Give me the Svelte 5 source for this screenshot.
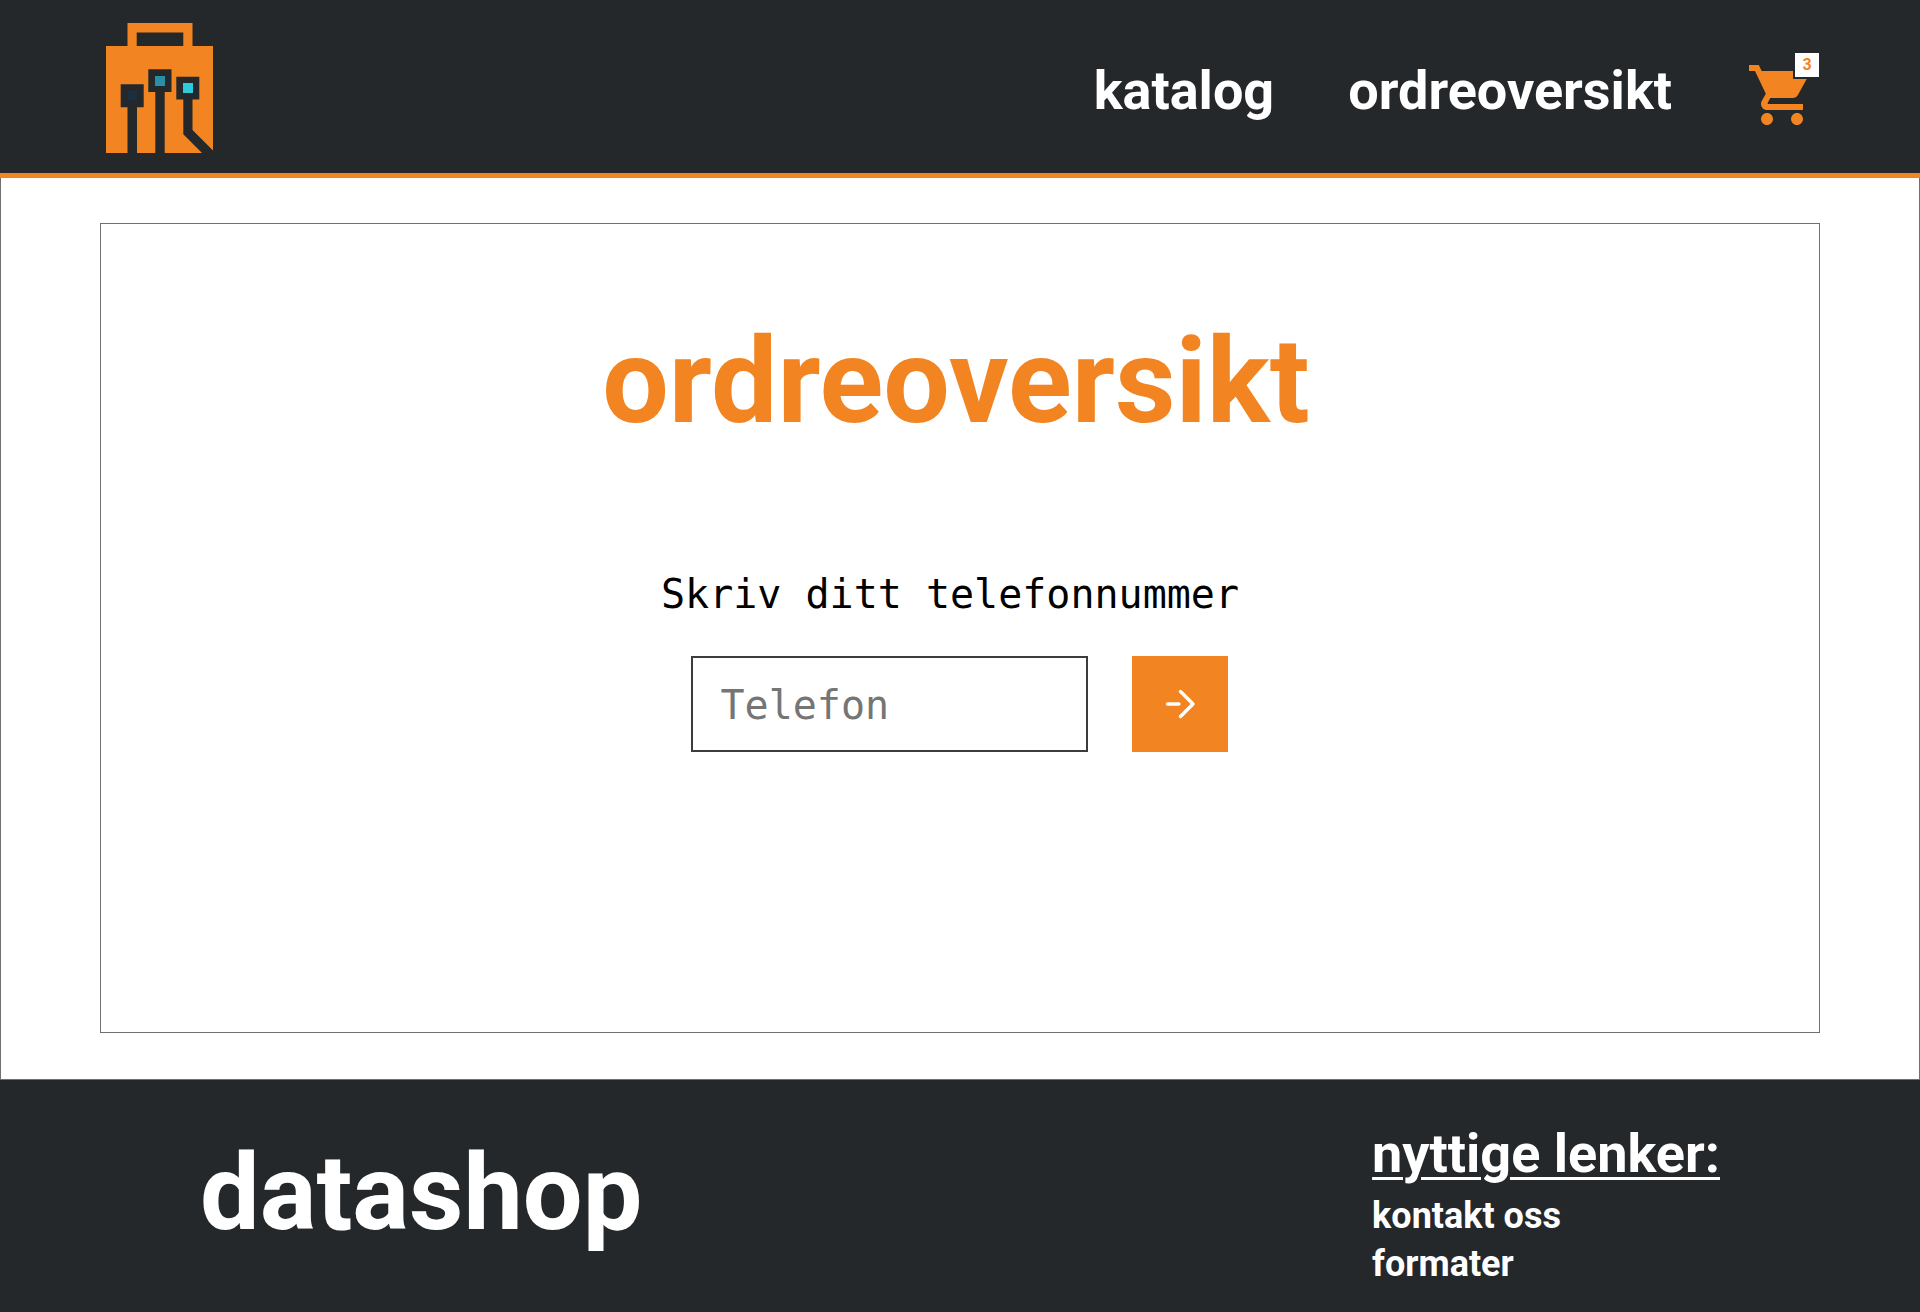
<script>
  let phone = $state('');
  const cartCount = 3;
  const links = ['kontakt oss', 'formater'];
</script>

<div class="page">
  <header>
    <a class="logo" href="/" aria-label="datashop">
      <svg width="107" height="130" viewBox="0 0 107 130" aria-hidden="true">
        <path fill="#f28522" fill-rule="evenodd" d="M21.5 0H86.5V23H107V130H0V23H21.5ZM30.7 9.6V23H77.3V9.6Z" />
        <g fill="#24282b">
          <path d="M14.7 61.3H37.7V84.3H31V130H21.5V84.3H14.7Z" />
          <path d="M42.3 46.2H65.5V69H58.7V130H49.3V69H42.3Z" />
          <path d="M70.3 53.8H93.3V76.5H86.5V107L107 127.5V130H96L77.3 111.3V76.5H70.3Z" />
        </g>
        <path fill="#1b2f3f" d="M21.3 68H31V77.7H21.3Z" />
        <path fill="#298fa8" d="M49 53H59V63H49Z" />
        <path fill="#2fc9dc" d="M77 60H87V70H77Z" />
      </svg>
    </a>
    <nav>
      <a class="link" href="/katalog">katalog</a>
      <a class="link" href="/ordreoversikt">ordreoversikt</a>
      <a class="cart" href="/handlekurv" aria-label="handlekurv">
        <svg width="72" height="72" viewBox="0 0 24 24" aria-hidden="true">
          <path fill="#f28522" d="M7 18c-1.1 0-1.99.9-1.99 2S5.9 22 7 22s2-.9 2-2-.9-2-2-2zM1 2v2h2l3.600 7.590-1.350 2.450c-.160.280-.250.610-.250.960 0 1.100.900 2 2 2h12v-2H7.420c-.140 0-.250-.110-.250-.250l.030-.120.900-1.630h7.450c.750 0 1.410-.410 1.750-1.030l3.580-6.490c.080-.140.120-.310.120-.480 0-.550-.450-1-1-1H5.210l-.940-2H1zm16 16c-1.100 0-1.990.900-1.990 2s.890 2 1.990 2 2-.900 2-2-.900-2-2-2z" />
        </svg>
        <span class="badge">{cartCount}</span>
      </a>
    </nav>
  </header>

  <main>
    <section>
      <h1>ordreoversikt</h1>
      <form onsubmit={(e) => e.preventDefault()}>
        <label for="phone">Skriv ditt telefonnummer</label>
        <div class="row">
          <input id="phone" type="tel" placeholder="Telefon" bind:value={phone} />
          <button type="submit" aria-label="Neste">
            <svg width="32" height="32" viewBox="0 0 32 32" aria-hidden="true">
              <path fill="none" stroke="#fff" stroke-width="3.4" stroke-linecap="round" stroke-linejoin="round" d="M3.500 16H15M16.500 3.500L29 16L16.500 28.500" />
            </svg>
          </button>
        </div>
      </form>
    </section>
  </main>

  <footer>
    <p class="brand">datashop</p>
    <div class="links">
      <h2>nyttige lenker:</h2>
      <ul>
        {#each links as link}
          <li><a href="/{link.replace(' ', '-')}">{link}</a></li>
        {/each}
      </ul>
    </div>
  </footer>
</div>

<style>
  :global(body) {
    margin: 0;
    background: #fff;
  }
  .page {
    min-height: 100vh;
    display: flex;
    flex-direction: column;
    font-family: Roboto, 'Liberation Sans', sans-serif;
    font-weight: 700;
  }
  .page * {
    box-sizing: border-box;
  }
  a {
    color: inherit;
    text-decoration: none;
  }
  header {
    display: flex;
    justify-content: space-between;
    align-items: center;
    padding: 23px 102px 20px 106px;
    background: #24282b;
    border-bottom: 5px solid #f28522;
    color: #fff;
  }
  .logo,
  .logo svg,
  .cart svg {
    display: block;
  }
  nav {
    display: flex;
    align-items: center;
    gap: 74px;
    padding-top: 14px;
    font-size: 54px;
    line-height: 64px;
  }
  .link {
    padding-bottom: 8px;
  }
  .cart {
    position: relative;
  }
  .badge {
    position: absolute;
    top: -8px;
    right: -3px;
    width: 28px;
    height: 28px;
    border: 2px solid #24282b;
    background: #fff;
    color: #f28522;
    font-size: 16px;
    line-height: 24px;
    text-align: center;
  }
  main {
    flex: 1;
    display: flex;
    padding: 45px 99px 46px;
    border: 1px solid #707070;
    border-top: 0;
  }
  section {
    flex: 1;
    display: flex;
    flex-direction: column;
    align-items: center;
    border: 1px solid #707070;
    padding: 80px 20px;
  }
  h1 {
    margin: 0;
    padding-right: 8px;
    color: #f28522;
    font-size: 118px;
    line-height: 156px;
  }
  form {
    display: flex;
    flex-direction: column;
    align-items: center;
    gap: 36px;
    padding-top: 108px;
    font-family: 'DejaVu Sans Mono', monospace;
    font-weight: 400;
    font-size: 40px;
  }
  label {
    padding-right: 20px;
    line-height: 52px;
    color: #000;
  }
  .row {
    display: flex;
    gap: 44px;
    padding-right: 2px;
  }
  input {
    width: 397px;
    height: 96px;
    padding: 2px 28px 0;
    border: 2px solid #3c3c3c;
    border-radius: 0;
    background: #fff;
    font: inherit;
  }
  input::placeholder {
    color: #757575;
    opacity: 1;
  }
  button {
    display: grid;
    place-items: center;
    width: 96px;
    height: 96px;
    border: 0;
    background: #f28522;
  }
  footer {
    display: flex;
    justify-content: space-between;
    padding: 40px 200px 24px;
    background: #24282b;
    color: #fff;
  }
  .brand {
    margin: 0;
    font-size: 106px;
    line-height: 146px;
  }
  h2 {
    margin: 0 0 4px;
    font-size: 54px;
    line-height: 68px;
    text-decoration: underline;
    text-decoration-thickness: 3px;
    text-underline-offset: 5px;
  }
  ul {
    margin: 0;
    padding: 0;
    list-style: none;
    font-size: 36px;
    line-height: 48px;
  }
</style>
